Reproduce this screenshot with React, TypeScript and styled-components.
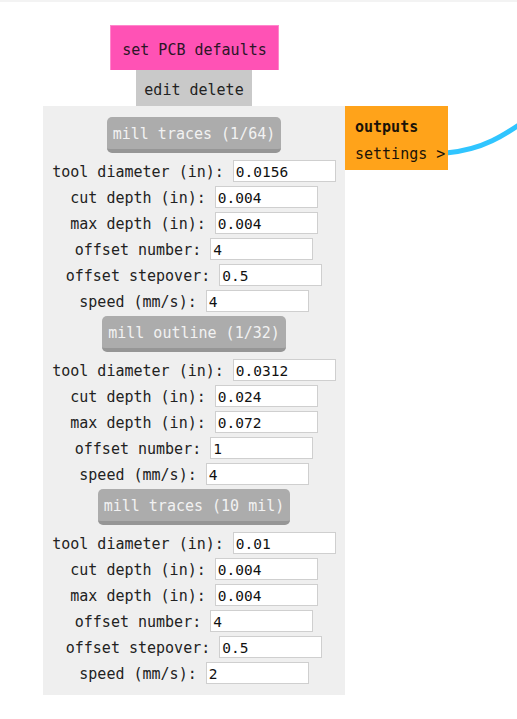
import React from "react";
import styled, { createGlobalStyle } from "styled-components";

const Global = createGlobalStyle`
  html, body { margin: 0; padding: 0; background: #ffffff; }
  body { font-family: "DejaVu Sans Mono", "Liberation Mono", monospace; }
`;

const Canvas = styled.div`
  position: relative;
  width: 517px;
  height: 719px;
  overflow: hidden;
  border-top: 2px solid #f3f3f3;
  box-sizing: border-box;
`;

const Module = styled.div`
  position: absolute;
  left: 43px;
  top: 23px;
  width: 302px;
  display: flex;
  flex-direction: column;
  align-items: center;
`;

const TitleBox = styled.div`
  box-sizing: border-box;
  height: 45px;
  width: 169px;
  margin-left: 1px;
  padding-top: 3px;
  background: #ff52b5;
  border: 1px solid #ff86cc;
  border-bottom: none;
  display: flex;
  align-items: center;
  justify-content: center;
  font-size: 15px;
  color: #2a1626;
`;

const EditBox = styled.div`
  box-sizing: border-box;
  height: 36px;
  width: 116px;
  padding-top: 3px;
  background: #c9c9c9;
  display: flex;
  align-items: center;
  justify-content: center;
  font-size: 15px;
  color: #222;
`;

const Panel = styled.div`
  box-sizing: border-box;
  width: 302px;
  background: #efefef;
  padding: 11px 0 7px;
  display: flex;
  flex-direction: column;
  align-items: center;
`;

const Section = styled.div`
  display: flex;
  flex-direction: column;
  align-items: center;
  width: 100%;
`;

const SectionButton = styled.div`
  box-sizing: border-box;
  height: 36px;
  padding: 1px 6px 0;
  margin-bottom: 7px;
  background: #acacac;
  border-bottom: 4px solid #969696;
  border-radius: 5px;
  display: flex;
  align-items: center;
  font-size: 15px;
  color: #f2f2f2;
  white-space: pre;
`;

const Row = styled.div`
  height: 26px;
  display: flex;
  align-items: flex-start;
  justify-content: center;
  gap: 9px;
  width: 100%;
`;

const Label = styled.span`
  box-sizing: border-box;
  height: 22px;
  padding-top: 1px;
  line-height: 22px;
  font-size: 15px;
  color: #222;
  white-space: pre;
`;

const Field = styled.input`
  box-sizing: border-box;
  width: 103px;
  height: 22px;
  margin: 0;
  padding: 1px 2px 0;
  border: 1px solid #cfcfcf;
  background: #ffffff;
  font-family: "DejaVu Sans Mono", "Liberation Mono", monospace;
  font-size: 14.5px;
  color: #111;
  outline: none;
`;

const OutputNode = styled.div`
  position: absolute;
  left: 345px;
  top: 104px;
  box-sizing: border-box;
  width: 103px;
  height: 64px;
  padding: 8px 10px 2px;
  background: #ffa31a;
  display: flex;
  flex-direction: column;
  font-size: 15px;
  color: #1a1208;
`;

const NodeLine = styled.div<{ $bold?: boolean }>`
  height: 27px;
  line-height: 27px;
  font-weight: ${(p) => (p.$bold ? 700 : 400)};
  white-space: pre;
`;

const Wire = styled.svg`
  position: absolute;
  left: 0;
  top: -2px;
  width: 517px;
  height: 719px;
  pointer-events: none;
`;

type Param = { label: string; value: string };
type Group = { title: string; params: Param[] };

const groups: Group[] = [
  {
    title: "mill traces (1/64)",
    params: [
      { label: "tool diameter (in):", value: "0.0156" },
      { label: "cut depth (in):", value: "0.004" },
      { label: "max depth (in):", value: "0.004" },
      { label: "offset number:", value: "4" },
      { label: "offset stepover:", value: "0.5" },
      { label: "speed (mm/s):", value: "4" },
    ],
  },
  {
    title: "mill outline (1/32)",
    params: [
      { label: "tool diameter (in):", value: "0.0312" },
      { label: "cut depth (in):", value: "0.024" },
      { label: "max depth (in):", value: "0.072" },
      { label: "offset number:", value: "1" },
      { label: "speed (mm/s):", value: "4" },
    ],
  },
  {
    title: "mill traces (10 mil)",
    params: [
      { label: "tool diameter (in):", value: "0.01" },
      { label: "cut depth (in):", value: "0.004" },
      { label: "max depth (in):", value: "0.004" },
      { label: "offset number:", value: "4" },
      { label: "offset stepover:", value: "0.5" },
      { label: "speed (mm/s):", value: "2" },
    ],
  },
];

export default function App() {
  return (
    <>
      <Global />
      <Canvas>
        <Wire viewBox="0 0 517 719">
          <path
            d="M446 153 C 480 150, 502 139, 545 106"
            fill="none"
            stroke="#30c5ff"
            strokeWidth={5}
          />
        </Wire>
        <Module>
          <TitleBox>set PCB defaults</TitleBox>
          <EditBox>edit delete</EditBox>
          <Panel>
            {groups.map((g) => (
              <Section key={g.title}>
                <SectionButton>{g.title}</SectionButton>
                {g.params.map((p) => (
                  <Row key={p.label}>
                    <Label>{p.label}</Label>
                    <Field defaultValue={p.value} />
                  </Row>
                ))}
              </Section>
            ))}
          </Panel>
        </Module>
        <OutputNode>
          <NodeLine $bold>outputs</NodeLine>
          <NodeLine>settings &gt;</NodeLine>
        </OutputNode>
      </Canvas>
    </>
  );
}
